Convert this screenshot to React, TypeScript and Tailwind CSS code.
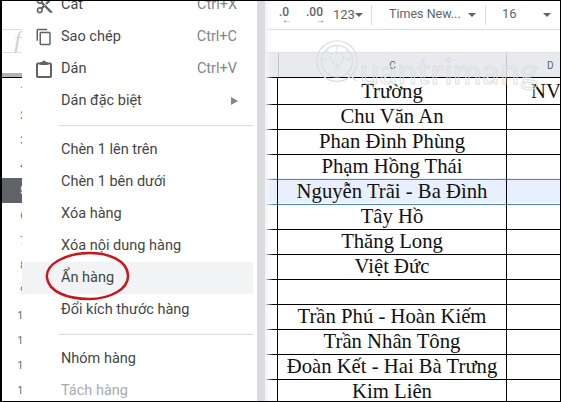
import { MdContentCut, MdContentCopy } from "react-icons/md";

const ROWS = [
  { n: "1", c: "Trường", d: "NV" },
  { n: "2", c: "Chu Văn An" },
  { n: "3", c: "Phan Đình Phùng" },
  { n: "4", c: "Phạm Hồng Thái", beforeSelected: true },
  { n: "5", c: "Nguyễn Trãi - Ba Đình", selected: true },
  { n: "6", c: "Tây Hồ" },
  { n: "7", c: "Thăng Long" },
  { n: "8", c: "Việt Đức" },
  { n: "9", c: "" },
  { n: "10", c: "Trần Phú - Hoàn Kiếm" },
  { n: "11", c: "Trần Nhân Tông" },
  { n: "12", c: "Đoàn Kết - Hai Bà Trưng" },
  { n: "13", c: "Kim Liên" },
];

function Caret() {
  return <span className="h-0 w-0 border-x-[4px] border-t-[4px] border-x-transparent border-t-[#5f6368]" />;
}

function PasteIcon() {
  return (
    <svg width="16" height="18" viewBox="0 0 16 18" fill="none" stroke="#5f6368" strokeWidth="2">
      <path d="M4 3.500H2a1 1 0 0 0-1 1V16a1 1 0 0 0 1 1h12a1 1 0 0 0 1-1V4.500a1 1 0 0 0-1-1h-2" />
      <path d="M4.500 4.500V2.500h2a1.500 1.500 0 0 1 3 0h2v2z" fill="#5f6368" strokeWidth="1" />
    </svg>
  );
}

function Toolbar() {
  return (
    <div className="flex h-[30px] items-center border-b border-[#dadce0] pl-[279px] text-[13px] text-[#5f6368]">
      <div className="flex w-[27px] flex-col items-start leading-none">
        <span className="text-[12px] font-medium">.0</span>
        <span className="-mt-[2px] ml-[3px] text-[10px] leading-[8px]">←</span>
      </div>
      <div className="flex w-[27px] flex-col items-start leading-none">
        <span className="text-[12px] font-medium">.00</span>
        <span className="-mt-[2px] ml-[9px] text-[10px] leading-[8px]">→</span>
      </div>
      <span className="w-[22px]">123</span>
      <Caret />
      <div className="ml-[8px] h-[20px] w-px bg-[#dadce0]" />
      <span className="ml-[17px] w-[79px] text-[12.5px]">Times New...</span>
      <Caret />
      <div className="ml-[9px] h-[20px] w-px bg-[#dadce0]" />
      <span className="ml-[16px] w-[41px] -translate-y-px">16</span>
      <Caret />
    </div>
  );
}

function ColumnHeader() {
  return (
    <div className="grid h-[24px] grid-cols-[278px_229px_1fr] text-[10px] text-[#5f6368]">
      <div className="bg-[#e8eaed]">
        <div className="h-[20px] w-[46px] bg-white" />
        <div className="h-[4px] w-[46px] bg-[#b4b4b4]" />
      </div>
      <div className="flex items-center justify-center border-x border-[#c4c7c9] bg-[#e8eaed] pt-[1px]">C</div>
      <div className="flex items-center bg-[#e8eaed] pl-[40px] pt-[1px]">D</div>
    </div>
  );
}

function Row({ n, c, d, selected, beforeSelected }: { n: string; c: string; d?: string; selected?: boolean; beforeSelected?: boolean }) {
  const line = selected || beforeSelected ? "border-b-[#4a86c8]" : "border-b-black";
  return (
    <div className={`grid h-[25px] grid-cols-[46px_232px_229px_1fr] font-['Liberation_Serif',serif] text-[20.7px] leading-[26px] text-[#111] ${selected ? "bg-[#e8f0fe]" : ""}`}>
      <div className={`flex items-center justify-center border-b font-['Roboto',sans-serif] text-[10px] ${selected ? "border-[#5f6368] bg-[#5f6368] font-bold text-white" : "border-[#e0e0e0] bg-white text-[#5f6368]"}`}>
        {n}
      </div>
      <div className={`border-b border-r border-r-black ${line}`} />
      <div className={`overflow-hidden whitespace-nowrap border-b border-r border-r-black text-center ${line}`}>{c}</div>
      <div className={`overflow-hidden whitespace-nowrap border-b pl-[24px] ${line}`}>{d}</div>
    </div>
  );
}

function Item({ label, shortcut, icon, arrow, active, disabled }: { label: string; shortcut?: string; icon?: React.ReactNode; arrow?: boolean; active?: boolean; disabled?: boolean }) {
  return (
    <div className={`flex h-[32px] items-center pr-[20px] ${active ? "mr-[4px] bg-[#f1f3f4] pr-[16px]" : ""}`}>
      <div className="flex w-[39px] justify-center pl-[5px]">{icon}</div>
      <span className={disabled ? "text-[#a8abae]" : "text-[#444746]"}>{label}</span>
      {shortcut ? <span className="ml-auto text-[#80868b]">{shortcut}</span> : null}
      {arrow ? <span className="ml-auto mr-[-1px] h-0 w-0 border-y-[4px] border-l-[7px] border-y-transparent border-l-[#80868b]" /> : null}
    </div>
  );
}

function Separator() {
  return <div className="my-[8px] ml-[37px] mr-[4px] h-px bg-[#dadce0]" />;
}

function ContextMenu() {
  return (
    <div className="absolute left-[22px] top-[-11px] flex h-[430px]">
      <div className="w-[235px] bg-white font-['Roboto',sans-serif] text-[14.5px]">
        <Item label="Cắt" shortcut="Ctrl+X" icon={<MdContentCut size={19} color="#5f6368" />} />
        <Item label="Sao chép" shortcut="Ctrl+C" icon={<MdContentCopy size={18} color="#5f6368" />} />
        <Item label="Dán" shortcut="Ctrl+V" icon={<PasteIcon />} />
        <Item label="Dán đặc biệt" arrow />
        <Separator />
        <Item label="Chèn 1 lên trên" />
        <Item label="Chèn 1 bên dưới" />
        <Item label="Xóa hàng" />
        <Item label="Xóa nội dung hàng" />
        <Item label="Ẩn hàng" active />
        <Item label="Đổi kích thước hàng" />
        <Separator />
        <Item label="Nhóm hàng" />
        <Item label="Tách hàng" disabled />
      </div>
      <div className="w-[8px] bg-[#dadce0]" />
      <div className="w-[8px] bg-gradient-to-r from-[#f3f4f5] to-transparent" />
    </div>
  );
}

function Watermark() {
  return (
    <div className="pointer-events-none absolute left-[314px] top-[39px] flex items-end font-['Lato',sans-serif] text-[34px] leading-[40px] text-transparent [-webkit-text-stroke:1px_#dcdfe2]">
      <svg width="46" height="46" viewBox="0 0 50 50" fill="none" stroke="#dcdfe2" strokeWidth="1.500">
        <circle cx="25" cy="24" r="22" />
        <circle cx="25" cy="24" r="17" />
        <path d="M37 37l9 9" />
        <circle cx="25" cy="21" r="7" strokeDasharray="3 2" />
        <path d="M22 30h6M22 33h6M25 8v4M13 12l3 3M37 12l-3 3M10 22h4M36 22h4" />
      </svg>
      <span className="-mb-[6px] tracking-[1px]">uantrimang</span>
    </div>
  );
}

export default function App() {
  return (
    <div className="relative h-[402px] w-[561px] overflow-hidden bg-white font-['Roboto',sans-serif]">
      <Toolbar />
      <div className="flex h-[23px] items-center border-b border-[#e0e0e0] pl-[14px] font-['Liberation_Serif',serif] text-[25px] italic text-[#cfd1d3]">
        f
      </div>
      <ColumnHeader />
      <div className="border-t border-black">
        {ROWS.map((r) => (
          <Row key={r.n} {...r} />
        ))}
      </div>
      <Watermark />
      <ContextMenu />
      <svg className="absolute left-[42px] top-[248px]" width="92" height="56" viewBox="0 0 92 56" fill="none">
        <path d="M5 30C3 16 24 5 48 5c18 0 37 7 38 22 1 14-18 24-39 24C26 51 7 44 5 30z" stroke="#c8161d" strokeWidth="2.500" />
      </svg>
      <div className="pointer-events-none absolute inset-0 border border-l-2 border-black" />
    </div>
  );
}
